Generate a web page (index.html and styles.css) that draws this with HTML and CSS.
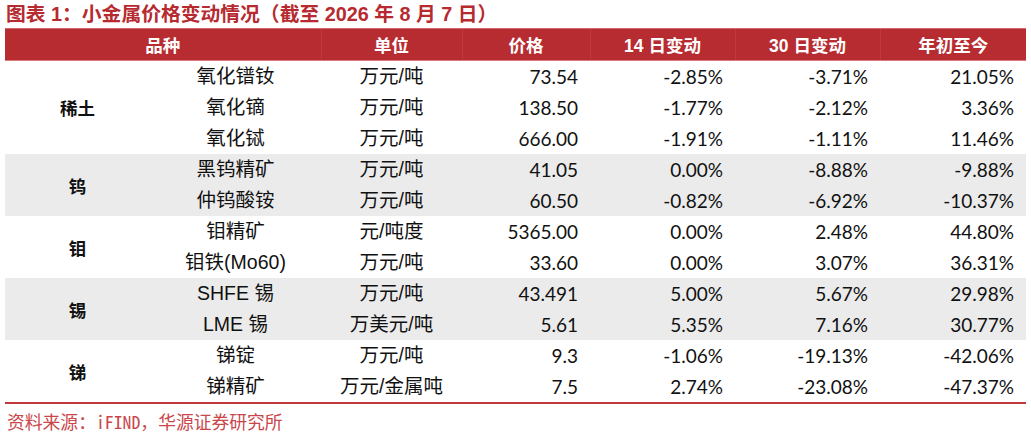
FILE: index.html
```html
<!DOCTYPE html>
<html lang="zh-CN">
<head>
<meta charset="utf-8">
<title>小金属价格变动情况</title>
<link rel="stylesheet" href="styles.css">
</head>
<body>
<div class="page">
  <h1 class="title">图表 1：小金属价格变动情况（截至 2026 年 8 月 7 日）</h1>
  <table class="data">
    <colgroup>
      <col class="c-cat"><col class="c-prod"><col class="c-unit"><col class="c-price"><col class="c-chg"><col class="c-chg"><col class="c-ytd">
    </colgroup>
    <thead>
      <tr>
        <th colspan="2">品种</th>
        <th>单位</th>
        <th>价格</th>
        <th>14 日变动</th>
        <th>30 日变动</th>
        <th>年初至今</th>
      </tr>
    </thead>
    <tbody>
      <tr><td class="cat" rowspan="3">稀土</td><td class="prod">氧化镨钕</td><td class="unit">万元/吨</td><td class="num">73.54</td><td class="num">-2.85%</td><td class="num">-3.71%</td><td class="num">21.05%</td></tr>
      <tr><td class="prod">氧化镝</td><td class="unit">万元/吨</td><td class="num">138.50</td><td class="num">-1.77%</td><td class="num">-2.12%</td><td class="num">3.36%</td></tr>
      <tr><td class="prod">氧化铽</td><td class="unit">万元/吨</td><td class="num">666.00</td><td class="num">-1.91%</td><td class="num">-1.11%</td><td class="num">11.46%</td></tr>
    </tbody>
    <tbody class="shade">
      <tr><td class="cat" rowspan="2">钨</td><td class="prod">黑钨精矿</td><td class="unit">万元/吨</td><td class="num">41.05</td><td class="num">0.00%</td><td class="num">-8.88%</td><td class="num">-9.88%</td></tr>
      <tr><td class="prod">仲钨酸铵</td><td class="unit">万元/吨</td><td class="num">60.50</td><td class="num">-0.82%</td><td class="num">-6.92%</td><td class="num">-10.37%</td></tr>
    </tbody>
    <tbody>
      <tr><td class="cat" rowspan="2">钼</td><td class="prod">钼精矿</td><td class="unit">元/吨度</td><td class="num">5365.00</td><td class="num">0.00%</td><td class="num">2.48%</td><td class="num">44.80%</td></tr>
      <tr><td class="prod">钼铁(Mo60)</td><td class="unit">万元/吨</td><td class="num">33.60</td><td class="num">0.00%</td><td class="num">3.07%</td><td class="num">36.31%</td></tr>
    </tbody>
    <tbody class="shade">
      <tr><td class="cat" rowspan="2">锡</td><td class="prod">SHFE 锡</td><td class="unit">万元/吨</td><td class="num">43.491</td><td class="num">5.00%</td><td class="num">5.67%</td><td class="num">29.98%</td></tr>
      <tr><td class="prod">LME 锡</td><td class="unit">万美元/吨</td><td class="num">5.61</td><td class="num">5.35%</td><td class="num">7.16%</td><td class="num">30.77%</td></tr>
    </tbody>
    <tbody class="last">
      <tr><td class="cat" rowspan="2">锑</td><td class="prod">锑锭</td><td class="unit">万元/吨</td><td class="num">9.3</td><td class="num">-1.06%</td><td class="num">-19.13%</td><td class="num">-42.06%</td></tr>
      <tr><td class="prod">锑精矿</td><td class="unit">万元/金属吨</td><td class="num">7.5</td><td class="num">2.74%</td><td class="num">-23.08%</td><td class="num">-47.37%</td></tr>
    </tbody>
  </table>
  <p class="source">资料来源：iFIND，华源证券研究所</p>
</div>
</body>
</html>
```

FILE: styles.css
```css
html, body {
  margin: 0;
  padding: 0;
  background: #ffffff;
}

.page {
  width: 1031px;
  height: 438px;
  overflow: hidden;
  font-family: "Liberation Sans", "Noto Sans CJK SC", sans-serif;
  color: #111111;
}

.title {
  margin: 0;
  padding: 1px 0 0 6px;
  height: 27px;
  line-height: 27px;
  font-size: 19.8px;
  font-weight: 700;
  color: #b62a30;
  font-family: "Liberation Sans", "Noto Sans CJK SC", sans-serif;
  white-space: nowrap;
}

.data {
  margin-left: 5px;
  width: 1021px;
  border-collapse: collapse;
  table-layout: fixed;
}

.c-cat { width: 145px; }
.c-prod { width: 171px; }
.c-unit { width: 141px; }
.c-price { width: 128px; }
.c-chg { width: 145px; }
.c-ytd { width: 146px; }

.data th {
  height: 31px;
  padding: 0;
  background: #b72c31;
  color: #ffffff;
  font-size: 17.5px;
  font-weight: 700;
  text-align: center;
  border-top: 1px solid #d36a6e;
  border-bottom: 1px solid #d9797c;
  border-left: 1px solid #bd3a3f;
}

.data th:first-child {
  border-left: none;
}

.data td {
  height: 31px;
  padding: 0;
  font-size: 19.5px;
  line-height: 31px;
  white-space: nowrap;
}

.data tbody.shade td {
  background: #ebebeb;
}

.data tbody.last tr:last-child td,
.data tbody.last td.cat {
  border-bottom: 2px solid #c0393d;
}

.cat {
  text-align: center;
  font-weight: 700;
  font-size: 17.5px !important;
  font-family: "Noto Sans CJK SC", sans-serif;
}

.prod, .unit {
  text-align: center;
}

.num {
  text-align: right;
  padding-right: 12px !important;
  font-family: "Lato", "Open Sans", sans-serif;
  font-size: 19px !important;
}

.source {
  margin: 0;
  padding: 2px 0 0 7px;
  line-height: 30px;
  font-size: 17.8px;
  font-weight: 300;
  color: #c9474b;
  font-family: "Noto Sans Mono CJK SC", "Noto Sans CJK SC", monospace;
  white-space: nowrap;
}
```
